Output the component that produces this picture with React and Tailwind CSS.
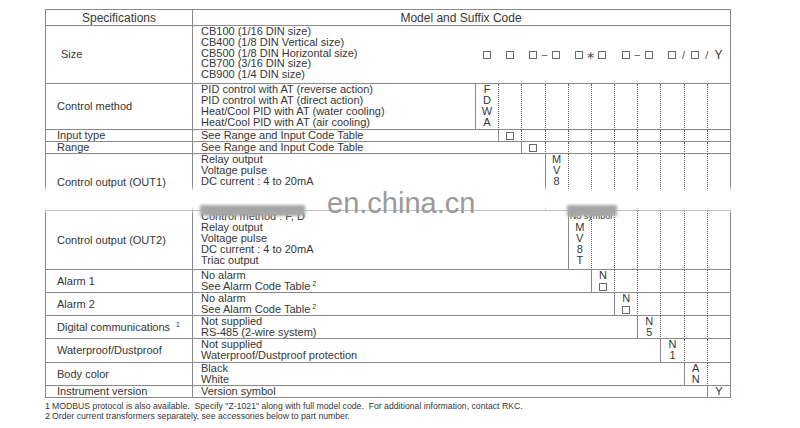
import React from "react";

const BOX = "box";

const rows = [
  {
    label: "Control method",
    lines: [
      "PID control with AT (reverse action)",
      "PID control with AT (direct action)",
      "Heat/Cool PID with AT (water cooling)",
      "Heat/Cool PID with AT (air cooling)",
    ],
    col: 0,
    code: ["F", "D", "W", "A"],
    h: "h-[46px]",
  },
  { label: "Input type", lines: ["See Range and Input Code Table"], col: 1, code: [BOX], h: "h-[12px]" },
  { label: "Range", lines: ["See Range and Input Code Table"], col: 2, code: [BOX], h: "h-[12px]" },
  {
    label: "Control output (OUT1)",
    lines: ["Relay output", "Voltage pulse", "DC current : 4 to 20mA"],
    col: 3,
    code: ["M", "V", "8"],
    h: "h-[57px]",
  },
  {
    label: "Control output (OUT2)",
    lines: ["Control method : F, D", "Relay output", "Voltage pulse", "DC current : 4 to 20mA", "Triac output"],
    col: 4,
    code: ["No symbol", "M", "V", "8", "T"],
    h: "h-[59px]",
  },
  { label: "Alarm 1", lines: ["No alarm", "See Alarm Code Table"], sup: [null, "2"], col: 5, code: ["N", BOX], h: "h-[23px]" },
  { label: "Alarm 2", lines: ["No alarm", "See Alarm Code Table"], sup: [null, "2"], col: 6, code: ["N", BOX], h: "h-[23px]" },
  {
    label: "Digital communications",
    labelSup: "1",
    lines: ["Not supplied", "RS-485 (2-wire system)"],
    col: 7,
    code: ["N", "5"],
    h: "h-[23px]",
  },
  {
    label: "Waterproof/Dustproof",
    lines: ["Not supplied", "Waterproof/Dustproof protection"],
    col: 8,
    code: ["N", "1"],
    h: "h-[24px]",
  },
  { label: "Body color", lines: ["Black", "White"], col: 9, code: ["A", "N"], h: "h-[23px]" },
  { label: "Instrument version", lines: ["Version symbol"], col: 10, code: ["Y"], h: "h-[12px]" },
];

// model code symbols above the code columns, separator sits on the right edge of the cell
const sizeCodes = [
  {}, {}, { sep: "−" }, {}, { sep: "∗" }, {}, { sep: "−" }, {}, { sep: "/" }, { sep: "/" }, { text: "Y" },
];

function Box() {
  return <span className="inline-block border border-[#6a6a6a] w-[8px] h-[8px]" />;
}

function CodeCell({ items }) {
  return (
    <div className="w-[23.2px] shrink-0 border-l border-b border-[#8a8a8a] flex flex-col items-center">
      {items.map((it, i) =>
        it === BOX ? (
          <div key={i} className="h-[11px] flex items-center">
            <Box />
          </div>
        ) : it.length > 2 ? (
          <div key={i} className="h-[11px] w-full pl-[1px] text-[9px] leading-[11px] whitespace-nowrap">
            {it}
          </div>
        ) : (
          <div key={i} className="h-[11px] leading-[11px]">{it}</div>
        )
      )}
    </div>
  );
}

function EmptyCell() {
  return <div className="w-[23.2px] shrink-0 border-b border-b-[#8a8a8a] border-l border-l-[#5a5a5a] [border-left-style:dotted]" />;
}

function Row({ row }) {
  const trailing = 10 - row.col;
  return (
    <div className={`flex ${row.h}`}>
      <div className="w-[147px] shrink-0 border-l border-b border-[#8a8a8a] pl-[11px] flex items-center">
        <span>{row.label}</span>
        {row.labelSup && <span className="relative -top-[3px] text-[7px] leading-none ml-[6px]">{row.labelSup}</span>}
      </div>
      <div className="flex-1 border-l border-b border-[#8a8a8a] pl-[8px]">
        {row.lines.map((l, i) => (
          <div key={i} className="h-[11px] leading-[11px] whitespace-nowrap">
            {l}
            {row.sup && row.sup[i] && (
              <span className="relative -top-[4px] text-[7px] leading-none ml-[2px]">{row.sup[i]}</span>
            )}
          </div>
        ))}
      </div>
      <CodeCell items={row.code} />
      {Array.from({ length: trailing }).map((_, i) => (
        <EmptyCell key={i} />
      ))}
    </div>
  );
}

export default function App() {
  return (
    <div className="relative w-[800px] h-[428px] bg-white overflow-hidden font-['Liberation_Sans',Arial,sans-serif] text-[11px] text-[#363636]">
      <div className="pt-[9px] pl-[45px]">
        <div className="w-[686px] border-t border-r border-[#8a8a8a]">
          {/* Header */}
          <div className="flex h-[16px] text-[12px]">
            <div className="w-[147px] shrink-0 border-l border-b border-[#8a8a8a] flex items-center justify-center">
              Specifications
            </div>
            <div className="flex-1 border-l border-b border-[#8a8a8a] flex items-center justify-center pr-[1px]">
              Model and Suffix Code
            </div>
          </div>

          {/* Size */}
          <div className="flex h-[58px]">
            <div className="w-[147px] shrink-0 border-l border-b border-[#8a8a8a] pl-[15px] flex items-center">Size</div>
            <div className="flex-1 flex border-l border-b border-[#8a8a8a]">
              <div className="flex-1 pl-[8px]">
                {[
                  "CB100 (1/16 DIN size)",
                  "CB400 (1/8 DIN Vertical size)",
                  "CB500 (1/8 DIN Horizontal size)",
                  "CB700 (3/16 DIN size)",
                  "CB900 (1/4 DIN size)",
                ].map((l) => (
                  <div key={l} className="leading-[10.8px] whitespace-nowrap">{l}</div>
                ))}
              </div>
              {sizeCodes.map((c, i) => (
                <div key={i} className="relative w-[23.2px] shrink-0 flex items-center justify-center">
                  {c.text ? <span className="text-[12px] leading-none">{c.text}</span> : <Box />}
                  {c.sep && (
                    <span className="absolute right-0 top-1/2 translate-x-1/2 -translate-y-1/2 text-[11px] leading-none text-[#555]">
                      {c.sep}
                    </span>
                  )}
                </div>
              ))}
            </div>
          </div>

          {rows.map((r) => (
            <Row key={r.label} row={r} />
          ))}
        </div>

        <div className="mt-[3px] text-[8.7px] leading-[10px] whitespace-nowrap">
          <div>
            <span className="text-[9px] mr-[2px]">1</span>
            MODBUS protocol is also available.&nbsp; Specify "Z-1021" along with full model code.&nbsp; For additional information, contact RKC.
          </div>
          <div>
            <span className="text-[9px] mr-[2px]">2</span>
            Order current transformers separately, see accessories below to part number.
          </div>
        </div>
      </div>

      {/* watermark band */}
      <div className="absolute left-0 top-[186px] w-[800px] h-[28px] bg-[linear-gradient(to_bottom,rgba(255,255,255,0)_0%,#fff_20%,#fff_72%,rgba(255,255,255,0)_100%)]" />
      <div className="absolute left-[200px] top-[205px] w-[105px] h-[11px] bg-[#a6a6a6] blur-[1.5px]" />
      <div className="absolute left-[567px] top-[205px] w-[50px] h-[11px] bg-[#a6a6a6] blur-[1.5px]" />
      <div className="absolute left-[327px] top-[189px] text-[29px] leading-[29px] text-[#9a9a9a] whitespace-nowrap">
        en.china.cn
      </div>
    </div>
  );
}
